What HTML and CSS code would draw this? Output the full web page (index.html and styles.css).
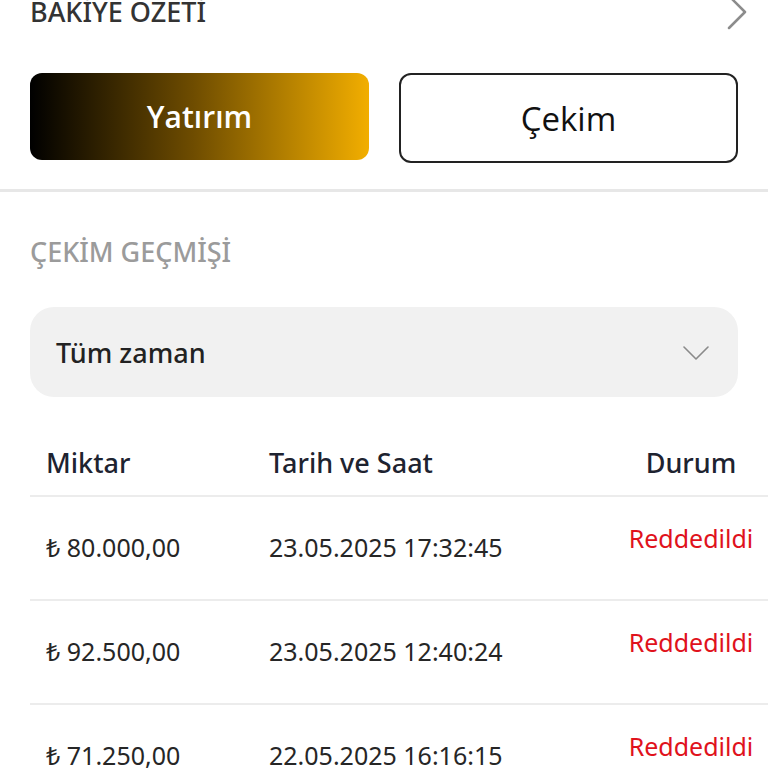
FILE: index.html
```html
<!DOCTYPE html>
<html>
<head>
    <link rel="stylesheet" href="styles.css">
</head>
<body>
<div class="balance">
    <div class="summary-head">
        <span class="summary-title">BAKİYE OZETİ</span>
        <svg class="summary-arrow" width="22" height="40" viewBox="0 0 22 40">
            <polyline points="3,-4 19,12 3,28" fill="none" stroke="#8c8c8c" stroke-width="2.5" stroke-linecap="round" stroke-linejoin="round"/>
        </svg>
    </div>

    <div class="actions">
        <button class="btn btn-deposit">Yatırım</button>
        <button class="btn btn-withdraw">Çekim</button>
    </div>
</div>

<div class="history">
    <div class="history-title">ÇEKİM GEÇMİŞİ</div>

    <div class="period-select">
        <span>Tüm zaman</span>
        <svg width="26" height="14" viewBox="0 0 26 14">
            <polyline points="1,1 13,13 25,1" fill="none" stroke="#8a8a8a" stroke-width="1.6" stroke-linecap="round" stroke-linejoin="round"/>
        </svg>
    </div>

    <div class="history-table">
        <div class="table-row table-head">
            <div class="cell cell-amount">Miktar</div>
            <div class="cell cell-date">Tarih ve Saat</div>
            <div class="cell cell-status">Durum</div>
        </div>
        <div class="table-row">
            <div class="cell cell-amount">₺ 80.000,00</div>
            <div class="cell cell-date">23.05.2025 17:32:45</div>
            <div class="cell cell-status status-rejected">Reddedildi</div>
        </div>
        <div class="table-row">
            <div class="cell cell-amount">₺ 92.500,00</div>
            <div class="cell cell-date">23.05.2025 12:40:24</div>
            <div class="cell cell-status status-rejected">Reddedildi</div>
        </div>
        <div class="table-row">
            <div class="cell cell-amount">₺ 71.250,00</div>
            <div class="cell cell-date">22.05.2025 16:16:15</div>
            <div class="cell cell-status status-rejected">Reddedildi</div>
        </div>
    </div>
</div>
</body>
</html>
```

FILE: styles.css
```css
* {
    margin: 0;
    padding: 0;
    box-sizing: border-box;
}

body {
    width: 768px;
    height: 768px;
    overflow: hidden;
    background: white;
    font-family: "Noto Sans", "Open Sans", sans-serif;
}

/* Balance summary */
.balance {
    padding: 0 30px 26px;
    border-bottom: 3px solid #e7e7e7;
}

.summary-head {
    display: flex;
    justify-content: space-between;
    align-items: flex-start;
    height: 36px;
    margin-top: -6px;
}

.summary-title {
    font-size: 27px;
    line-height: 36px;
    font-weight: 500;
    color: #333;
}

.summary-arrow {
    margin-top: 6px;
    margin-right: -10px;
}

.actions {
    display: grid;
    grid-template-columns: 1fr 1fr;
    gap: 30px;
    align-items: start;
    margin-top: 43px;
}

.btn {
    display: flex;
    align-items: center;
    justify-content: center;
    border-radius: 12px;
    font-family: "Open Sans", "Noto Sans", sans-serif;
    cursor: pointer;
}

.btn-deposit {
    height: 87px;
    border: none;
    background: linear-gradient(90deg, #000 0%, #6e4c00 48%, #f2ae00 100%);
    color: #fff;
    font-size: 30px;
    font-weight: 600;
}

.btn-withdraw {
    height: 90px;
    border: 2px solid #222;
    background: white;
    color: #111;
    font-size: 33px;
    font-weight: 500;
}

/* Withdrawal history */
.history {
    padding: 0 0 0 30px;
}

.history-title {
    margin-top: 42px;
    font-size: 27px;
    line-height: 36px;
    font-weight: 500;
    color: #9b9b9b;
}

.period-select {
    display: flex;
    align-items: center;
    justify-content: space-between;
    width: 708px;
    height: 90px;
    margin-top: 37px;
    padding: 0 29px 0 26px;
    background: #f1f1f1;
    border-radius: 24px;
    font-size: 27px;
    font-weight: 500;
    color: #222;
}

.period-select svg {
    margin-top: 2px;
}

.history-table {
    width: 738px;
}

.table-row {
    display: grid;
    grid-template-columns: 239px 1fr 150px;
    align-items: start;
    padding: 33px 2px 35px 0;
    border-bottom: 2px solid #ececec;
    font-size: 25px;
    line-height: 34px;
    color: #262626;
}

.table-head {
    padding: 48px 2px 14px 0;
    font-size: 27px;
    line-height: 36px;
    font-weight: 500;
    color: #1e2330;
}

.cell-amount {
    padding-left: 16px;
}

.cell-status {
    text-align: center;
}

.status-rejected {
    margin-top: -9px;
    color: #e0121c;
}
```
